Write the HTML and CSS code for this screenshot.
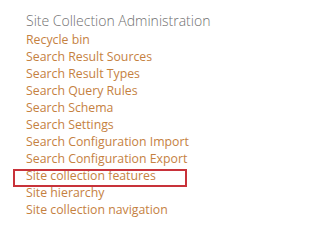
FILE: index.html
```html
<!DOCTYPE html>
<html>
<head>
<meta charset="utf-8">
<link rel="stylesheet" href="styles.css">
</head>
<body>
<div class="panel">
  <h3 class="title">Site Collection Administration</h3>
  <ul class="links">
    <li><a href="#">Recycle bin</a></li>
    <li><a href="#">Search Result Sources</a></li>
    <li><a href="#">Search Result Types</a></li>
    <li><a href="#">Search Query Rules</a></li>
    <li><a href="#">Search Schema</a></li>
    <li><a href="#">Search Settings</a></li>
    <li><a href="#">Search Configuration Import</a></li>
    <li><a href="#">Search Configuration Export</a></li>
    <li class="marked"><a href="#">Site collection features</a></li>
    <li><a href="#">Site hierarchy</a></li>
    <li><a href="#">Site collection navigation</a></li>
  </ul>
</div>
</body>
</html>
```

FILE: styles.css
```css
html, body {
  margin: 0;
  padding: 0;
  background: #ffffff;
}
.panel {
  padding: 11px 0 0 26px;
  font-family: "Open Sans", "Noto Sans", sans-serif;
}
.title {
  margin: 0;
  font-size: 14px;
  font-weight: 300;
  color: #707070;
  line-height: 20px;
}
.links {
  list-style: none;
  margin: 0;
  padding: 0;
}
.links li {
  line-height: 17px;
  font-size: 12.3px;
}
.links a {
  color: #c5813f;
  text-decoration: none;
}
.marked {
  position: relative;
}
.marked::after {
  content: "";
  position: absolute;
  left: -13px;
  top: 2px;
  width: 170px;
  height: 14px;
  border: 2px solid #c8323a;
}
```
